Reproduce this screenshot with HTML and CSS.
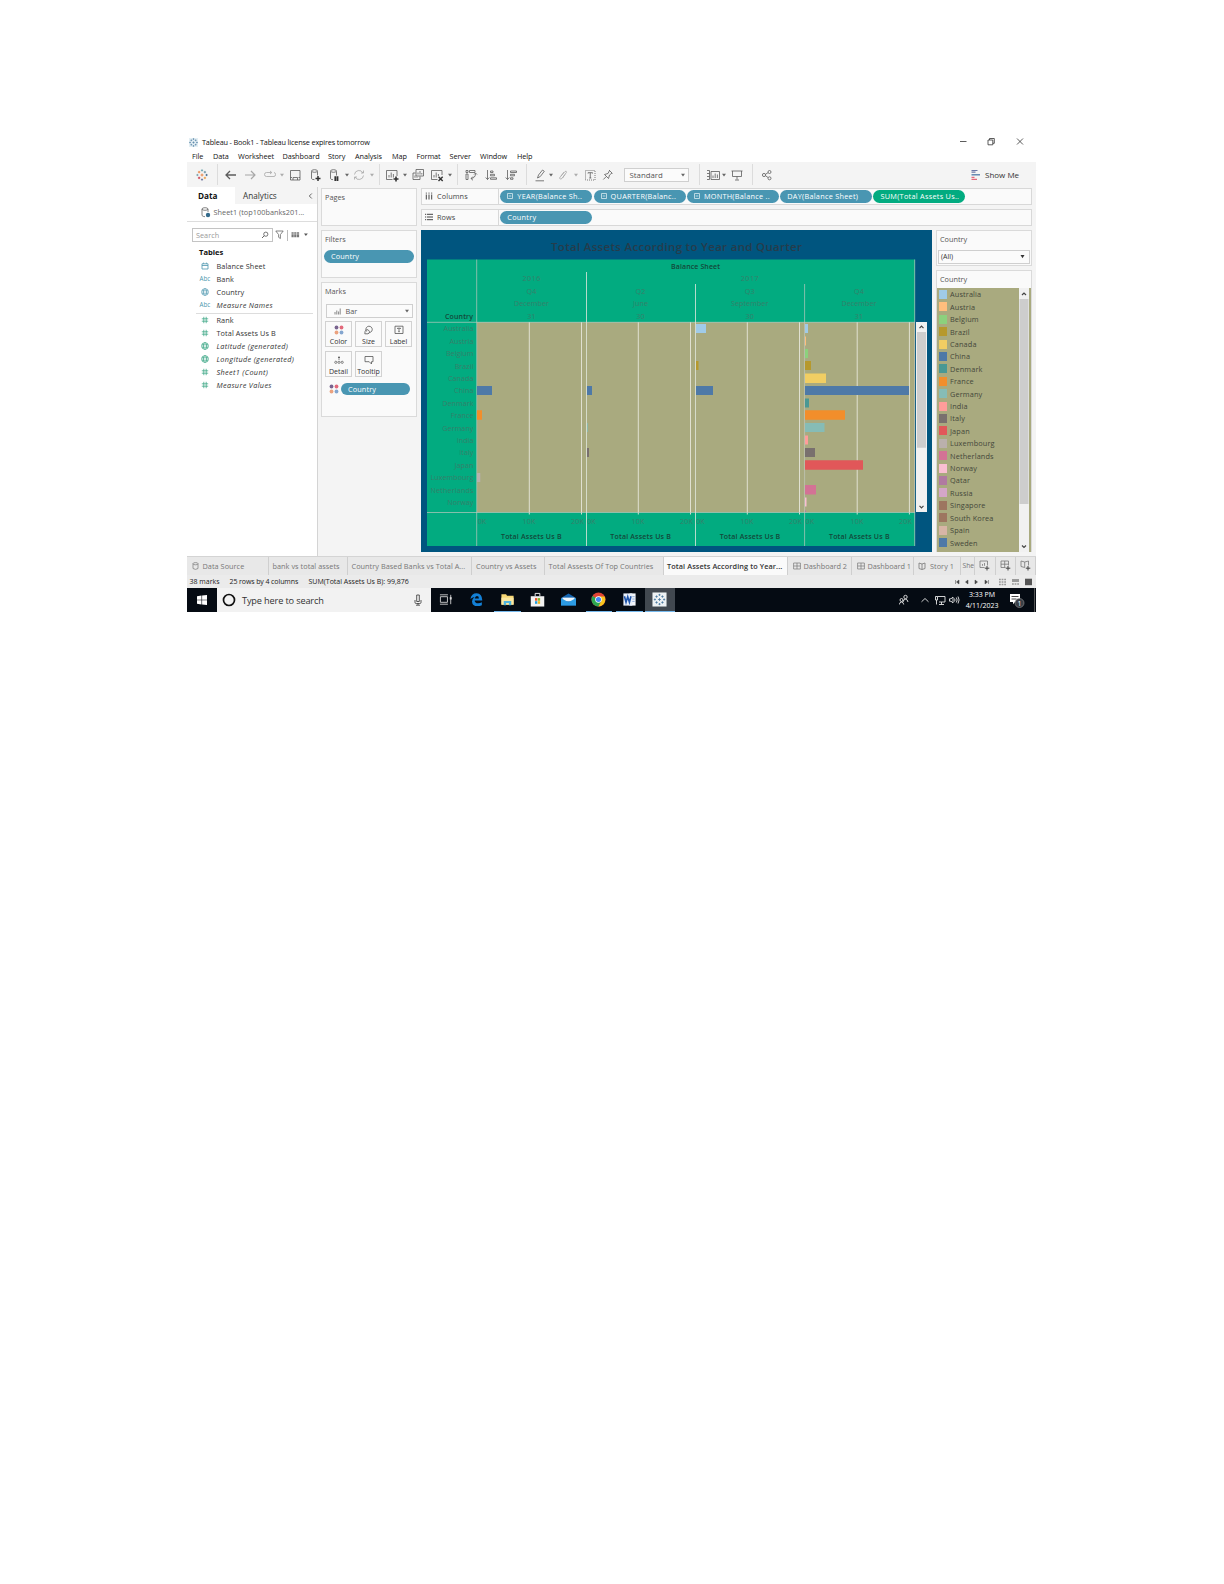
FILE: index.html
```html
<!DOCTYPE html>
<html lang="en">
<head>
<meta charset="utf-8">
<title>Tableau - Book1</title>
<link rel="stylesheet" href="styles.css">
</head>
<body>
<svg width="0" height="0" class="defs">
  <defs>
    <symbol id="caret" viewBox="0 0 4 14"><path d="M0 5.800h4L2 8.400z" fill="#666"/></symbol>
    <symbol id="hash" viewBox="0 0 8 8"><path d="M2.800 .8v6.400M5.200 .8v6.400M.8 2.800h6.400M.8 5.200h6.400" stroke="#2b9f7b" stroke-width=".7" fill="none"/></symbol>
    <symbol id="globe" viewBox="0 0 8 8"><g fill="none" stroke="currentColor" stroke-width=".65"><circle cx="4" cy="4" r="3.400"/><ellipse cx="4" cy="4" rx="1.600" ry="3.400"/><path d="M.8 2.800h6.400M.8 5.200h6.400"/></g></symbol>
    <symbol id="dots" viewBox="0 0 10 10"><circle cx="2.500" cy="2.500" r="1.900" fill="#79648f"/><circle cx="7.500" cy="2.500" r="1.900" fill="#e2697b"/><circle cx="2.500" cy="7.500" r="1.900" fill="#eba27f"/><circle cx="7.500" cy="7.500" r="1.900" fill="#84a6cf"/></symbol>
    <symbol id="dash" viewBox="0 0 8 8"><path d="M.6 1h6.800v6H.6zM4 1v6M.6 4h6.800" fill="none" stroke="#777" stroke-width=".7"/></symbol>
    <symbol id="box" viewBox="0 0 6 6"><path d="M.5.5h5v5h-5zM1.700 3h2.600" fill="none" stroke="#d5eaf0" stroke-width=".8"/></symbol>
    <symbol id="spark" viewBox="0 0 12 12"><g stroke-width=".8" fill="none"><path d="M6 4.500v3M4.500 6h3" stroke="#e8762d"/><path d="M6 .3v2.200M4.900 1.400h2.200" stroke="#5b9aa8"/><path d="M6 9.500v2.200M4.900 10.600h2.200" stroke="#5b6591"/><path d="M.3 6h2.200M1.400 4.900v2.200" stroke="#7099a6"/><path d="M9.500 6h2.200M10.600 4.900v2.200" stroke="#335a84"/><path d="M3.100 1.900v2.400M1.900 3.100h2.400" stroke="#e8762d"/><path d="M8.900 1.900v2.400M7.700 3.100h2.400" stroke="#59879b"/><path d="M3.100 7.700v2.400M1.900 8.900h2.400" stroke="#c72035"/><path d="M8.900 7.700v2.400M7.700 8.900h2.400" stroke="#eb912c"/></g></symbol>
    <symbol id="sparkblue" viewBox="0 0 12 12"><path d="M6 4.500v3M4.500 6h3M6 .3v2.200M4.900 1.400h2.200M6 9.500v2.200M4.900 10.600h2.200M.3 6h2.200M1.400 4.900v2.200M9.500 6h2.200M10.600 4.900v2.200M3.100 1.900v2.400M1.900 3.100h2.400M8.900 1.900v2.400M7.700 3.100h2.400M3.100 7.700v2.400M1.900 8.900h2.400M8.900 7.700v2.400M7.700 8.900h2.400" stroke-width=".7" fill="none" stroke="#3c6f98"/></symbol>
  </defs>
</svg>
<div class="app">
  <header class="titlebar">
    <svg class="tlogo" viewBox="0 0 12 12"><path d="M0 0h12v12H0z" fill="#e4eff4"/><use href="#sparkblue"/></svg>
    <span class="title">Tableau - Book1 - Tableau license expires tomorrow</span>
    <svg class="winctl" width="66" height="12" viewBox="0 0 66 12" fill="none" stroke="#333" stroke-width=".8"><path d="M0 5.500h6.500M57 2.500l6 6M63 2.500l-6 6M28 4h4.800v4.800H28zM29.500 4V2.500h4.800v4.800h-1.500"/></svg>
  </header>
  <nav class="menu"><span>File</span><span>Data</span><span>Worksheet</span><span>Dashboard</span><span>Story</span><span>Analysis</span><span>Map</span><span>Format</span><span>Server</span><span>Window</span><span>Help</span></nav>
  <div class="toolbar">
    <svg class="i" viewBox="-1 -1 14 14"><use href="#spark" width="12" height="12"/></svg>
    <i class="sep"></i>
    <svg class="i" viewBox="0 0 14 14"><path d="M12 7H2.500M6 3L2 7l4 4" stroke-width="1.300"/></svg>
    <svg class="i dim" viewBox="0 0 14 14"><path d="M2 7h9.500M8 3l4 4-4 4" stroke-width="1.200"/></svg>
    <svg class="i dim" viewBox="0 0 14 14"><path d="M8.500 4.500H3.500Q1.500 4.500 1.500 6.500T3.500 8.500H11Q12.500 8.500 12.500 6.500T11 4.500M7 3l1.800 1.500L7 6"/></svg>
    <svg class="c dim"><use href="#caret"/></svg>
    <svg class="i" viewBox="0 0 14 14"><path d="M2.500 2.500h9.500v9.500H2.500zM2.500 9.500h1.500M10.500 9.500H12M5 12v-2.500h4.500V12"/></svg>
    <svg class="i" viewBox="0 0 14 14"><path d="M3.500 3.500v7q0 1 3 1.200M9.500 3.500v4"/><ellipse cx="6.500" cy="3" rx="3" ry="1.300"/><path d="M10 8v5M7.500 10.500h5" stroke="#333" stroke-width="1.500"/></svg>
    <svg class="i" viewBox="0 0 14 14"><path d="M3.500 3.500v7q0 1 2.500 1.200M9.500 3.500v4"/><ellipse cx="6.500" cy="3" rx="3" ry="1.300"/><path d="M8.300 8.300V13M10.500 8.300V13" stroke="#333" stroke-width="1.800"/></svg>
    <svg class="c"><use href="#caret"/></svg>
    <svg class="i dim" viewBox="0 0 14 14"><path d="M2.500 6.500A4.500 4.500 0 0 1 11 5M11.500 7.500A4.500 4.500 0 0 1 3 9M11.500 2.500V5H9M2.500 11.500V9H5"/></svg>
    <svg class="c dim"><use href="#caret"/></svg>
    <i class="sep"></i>
    <svg class="i" viewBox="0 0 14 14"><path d="M7.500 11.500H1.500v-9h10.500V8M4 9.500V7M6.200 9.500V4.500M8.400 9.500V6"/><path d="M11 8.500v5M8.500 11h5" stroke="#333" stroke-width="1.600"/></svg>
    <svg class="c"><use href="#caret"/></svg>
    <svg class="i" viewBox="0 0 14 14"><path d="M5 1.500h7.500v6.500H5zM4.500 5H2v6.500h7V8.500M7 6.500v-2M9 6.500V3M10.800 6.500V5M4 9.800V7.500M6 9.800v-1"/></svg>
    <svg class="i" viewBox="0 0 14 14"><path d="M7.500 11.500H1.500v-9h10.500V7M4 9.500V7M6.200 9.500V4.500M8.400 8V6"/><path d="M8.500 8.800l4.200 4.200M12.700 8.800l-4.200 4.200" stroke="#333" stroke-width="1.400"/></svg>
    <svg class="c"><use href="#caret"/></svg>
    <i class="sep"></i>
    <svg class="i" viewBox="0 0 14 14"><path d="M2 2.500h2v2H2zM5.500 2.500H11v2H5.500zM2 6h2v5.500H2zM11.500 5.500q0 4.500-4.500 5M9 8.500l-2 2 2 1.800M10 6.500l1.500-1.500L13 6.500"/></svg>
    <svg class="i" viewBox="0 0 14 14"><path d="M3.500 2v9.500M1.700 9.500l1.800 2 1.800-2M6.500 3H9v1.500H6.500zM6.500 6.300H10.500v1.500h-4zM6.500 9.800h6v1.500h-6z"/></svg>
    <svg class="i" viewBox="0 0 14 14"><path d="M3.500 2v9.500M1.700 9.500l1.800 2 1.800-2M6.500 3h6v1.500h-6zM6.500 6.300H10.500v1.500h-4zM6.500 9.800H9v1.500H6.500z"/></svg>
    <i class="sep"></i>
    <svg class="i" viewBox="0 0 14 14"><path d="M4.500 10l1-3L9.500 2l1.800 1.300-4 5.200zM2.500 12.800H11"/></svg>
    <svg class="c"><use href="#caret"/></svg>
    <svg class="i dim" viewBox="0 0 14 14"><path d="M5 8l4-4.500q1.500-1 1.500.8L6 10.500q-2 1.500-2.500-.5L8 4M9 6.500L6.500 10"/></svg>
    <svg class="c dim"><use href="#caret"/></svg>
    <svg class="i" viewBox="0 0 14 14"><path d="M2.500 2.500h9.500v9.500H2.500z" stroke-dasharray="1 1"/><path d="M5 5.500V4.700h4.500v.8M7.250 4.700V10M6.300 10h2"/></svg>
    <svg class="i" viewBox="0 0 14 14"><path d="M8 2l3.500 3.500M8.500 2.500L7 5.500 3.500 6.500 7.500 10.500 8.500 7 11 5M5.300 8.500l-3 3"/></svg>
    <div class="select std"><span>Standard</span><svg class="c"><use href="#caret"/></svg></div>
    <i class="sep"></i>
    <svg class="i" viewBox="0 0 14 14"><path d="M1 2.500h2.500v9H1M1 5.500h2.500M1 8.500h2.500M5 3.500h8.500v8H5zM7 10V7.500M9.200 10V5.500M11.400 10V6.500"/></svg>
    <svg class="c"><use href="#caret"/></svg>
    <svg class="i" viewBox="0 0 14 14"><path d="M1.500 3h11M2.500 3v5.500h9V3M7 8.500v3M5 12h4"/></svg>
    <i class="sep"></i>
    <svg class="i" viewBox="0 0 14 14"><circle cx="4" cy="7" r="1.600"/><circle cx="9.500" cy="4" r="1.500"/><circle cx="9.500" cy="10.300" r="1.500"/><path d="M5.500 6.300L8 4.700M5.500 7.700L8 9.500"/></svg>
    <div class="showme"><svg width="10" height="12" viewBox="0 0 10 12"><path d="M.5 1.500h6M.5 3.200h4" stroke="#6c78a8" stroke-width="1.200"/><path d="M.5 5.800h8.500" stroke="#4e79a7" stroke-width="1.300"/><path d="M.5 8.400h3M.5 10.300h5.500" stroke="#e2697b" stroke-width="1.200"/></svg><span>Show Me</span></div>
  </div>

  <main class="body">
    <aside class="data">
      <div class="dtabs"><b>Data</b><span>Analytics</span><svg width="5" height="8" viewBox="0 0 5 8"><path d="M3.800 1.500L1.300 4l2.500 2.500" fill="none" stroke="#444" stroke-width=".8"/></svg></div>
      <div class="source"><svg width="10" height="11" viewBox="0 0 10 11"><g fill="none" stroke="#666" stroke-width=".8"><ellipse cx="4" cy="2" rx="3" ry="1.300"/><path d="M1 2v6.500q1 1.200 3 1.200M7 2v3"/></g><circle cx="7" cy="8" r="2.200" fill="#356b8c"/></svg><span>Sheet1 (top100banks201...</span></div>
      <div class="find">
        <div class="search"><span>Search</span><svg width="8" height="8" viewBox="0 0 8 8"><circle cx="4.800" cy="3.200" r="2.100" fill="none" stroke="#555" stroke-width=".8"/><path d="M3.300 4.700L1 7" stroke="#555" stroke-width=".9"/></svg></div>
        <svg width="9" height="10" viewBox="0 0 9 10"><path d="M.8 1h7.400L5.400 4.600V8.500L3.600 7.300V4.600z" fill="none" stroke="#666" stroke-width=".8"/></svg>
        <i></i>
        <svg width="20" height="10" viewBox="0 0 20 10"><path d="M.5 2.200h2.200v5H.5zM3.200 2.200h2.200v5H3.200zM5.900 2.200h2.200v5H5.900z" fill="#777"/><path d="M0 4h8.500" stroke="#fff" stroke-width=".5"/><path d="M13 3.500h3.800L14.900 6z" fill="#555"/></svg>
      </div>
      <h3>Tables</h3>
      <ul class="fields dims">
        <li><svg class="g" viewBox="0 0 8 8"><path d="M1 1.800h6v5.200H1zM1 3.500h6M2.600.6v1.200M5.400.6v1.200" fill="none" stroke="#4b96ae" stroke-width=".8"/></svg>Balance Sheet</li>
        <li><small>Abc</small>Bank</li>
        <li><svg class="g blue"><use href="#globe"/></svg>Country</li>
        <li class="it"><small>Abc</small>Measure Names</li>
      </ul>
      <ul class="fields meas">
        <li><svg class="g"><use href="#hash"/></svg>Rank</li>
        <li><svg class="g"><use href="#hash"/></svg>Total Assets Us B</li>
        <li class="it"><svg class="g green"><use href="#globe"/></svg>Latitude (generated)</li>
        <li class="it"><svg class="g green"><use href="#globe"/></svg>Longitude (generated)</li>
        <li class="it"><svg class="g"><use href="#hash"/></svg>Sheet1 (Count)</li>
        <li class="it"><svg class="g"><use href="#hash"/></svg>Measure Values</li>
      </ul>
    </aside>

    <section class="cards">
      <div class="card pages"><h4>Pages</h4></div>
      <div class="card filters"><h4>Filters</h4><div class="pill">Country</div></div>
      <div class="card marks"><h4>Marks</h4>
        <div class="select bar"><svg width="7" height="7" viewBox="0 0 7 7"><path d="M1 6.500V4M2.800 6.500V2.500M4.600 6.500V3.500M6.200 6.500V.5" stroke="#888" stroke-width="1"/></svg><span>Bar</span><svg class="c"><use href="#caret"/></svg></div>
        <div class="btns">
          <div><svg><use href="#dots"/></svg>Color</div>
          <div><svg viewBox="0 0 10 10"><path d="M2.600 6.500A3.200 3.200 0 1 1 5.500 7.600M2.600 4.700Q.5 6 .8 8.800H4Q5.800 8.500 5.400 6.300Q4.300 4.200 2.600 4.700" fill="none" stroke="#555" stroke-width=".8"/></svg>Size</div>
          <div><svg viewBox="0 0 10 10"><path d="M1 1.200h8v7.300H1zM3.500 4V3.200h3V4M5 3.200v3.500M4.300 6.700h1.400" fill="none" stroke="#555" stroke-width=".8"/></svg>Label</div>
          <div><svg viewBox="0 0 10 10"><circle cx="5" cy="2.500" r="1" fill="#555"/><path d="M5 4v1" stroke="#555" stroke-width=".7"/><g fill="none" stroke="#555" stroke-width=".7"><circle cx="1.800" cy="7.300" r="1.100"/><circle cx="5" cy="7.300" r="1.100"/><circle cx="8.200" cy="7.300" r="1.100"/></g></svg>Detail</div>
          <div><svg viewBox="0 0 10 10"><path d="M1 1.500h8v5.200H7.500V9L5.200 6.700H1z" fill="none" stroke="#555" stroke-width=".8"/></svg>Tooltip</div>
        </div>
        <div class="enc"><svg width="10" height="10"><use href="#dots"/></svg><div class="pill">Country</div></div>
      </div>
    </section>

    <section class="work">
      <div class="shelf"><div class="lab"><svg width="8" height="8" viewBox="0 0 8 8"><path d="M1.300 2.500V7.500M4 2.500V7.500M6.700 2.500V7.500M1.300.6v1M4 .6v1M6.700.6v1" stroke="#444"/></svg>Columns</div>
        <div class="pill"><svg><use href="#box"/></svg><span>YEAR(Balance Sh..</span></div><div class="pill"><svg><use href="#box"/></svg><span>QUARTER(Balanc..</span></div><div class="pill"><svg><use href="#box"/></svg><span>MONTH(Balance ..</span></div><div class="pill"><span>DAY(Balance Sheet)</span></div><div class="pill green"><span>SUM(Total Assets Us..</span></div></div>
      <div class="shelf"><div class="lab"><svg width="8" height="8" viewBox="0 0 8 8"><path d="M2 1.300h6M2 4h6M2 6.700h6M0 1.300h1.200M0 4h1.200M0 6.700h1.200" stroke="#444"/></svg>Rows</div><div class="pill">Country</div></div>
      <div class="lower">
        <svg class="viz" width="511" height="322" viewBox="421 230 511 322">
          <path d="M421 230h511v322H421z" fill="#00557f"/>
          <path d="M427 259.500h488V546H427z" fill="#02ab80"/>
          <path d="M477 322.300h438v190H477z" fill="#a9aa7f"/>
          <text x="551" y="250.800" class="vt" textLength="251">Total Assets According to Year and Quarter</text>
          <g stroke="#e6e7da" stroke-width=".9">
            <path d="M529.300 322v192.500M581.500 322v192.500M638.300 322v192.500M690.500 322v192.500M747.300 322v192.500M799.500 322v192.500M857.200 322v192.500M909.400 322v192.500"/>
          </g>
          <g fill="none" stroke="#c4c9c0" stroke-opacity=".75" stroke-width=".9"><path d="M476.700 259.500V546M804.600 284V546M914.700 259.500V546M427 322.300h488M427 512.500h488"/><path d="M586.500 272V546M695.500 284V546" stroke="#dfe6dc" stroke-opacity=".9"/></g>
          <g class="hb"><text x="671" y="268.800" textLength="49">Balance Sheet</text><text x="445" y="318.600" textLength="28">Country</text>
            <text x="501" y="539.300" textLength="60.500">Total Assets Us B</text><text x="610.300" y="539.300" textLength="60.500">Total Assets Us B</text><text x="719.700" y="539.300" textLength="60.500">Total Assets Us B</text><text x="829" y="539.300" textLength="60.500">Total Assets Us B</text></g>
          <g class="hd mid"><text x="531.500" y="281.300" textLength="18">2016</text><text x="749.700" y="281.300" textLength="18">2017</text>
            <text x="531.500" y="293.800">Q4</text><text x="640.500" y="293.800">Q2</text><text x="749.700" y="293.800">Q3</text><text x="859" y="293.800">Q4</text>
            <text x="531.500" y="306.300">December</text><text x="640.500" y="306.300">June</text><text x="749.700" y="306.300">September</text><text x="859" y="306.300">December</text>
            <text x="531.500" y="318.700">31</text><text x="640.500" y="318.700">30</text><text x="749.700" y="318.700">30</text><text x="859" y="318.700">31</text>
            <text x="482" y="524.300">0K</text><text x="529" y="524.300">10K</text><text x="577.500" y="524.300">20K</text><text x="591.500" y="524.300">0K</text><text x="638" y="524.300">10K</text><text x="686.500" y="524.300">20K</text><text x="700.500" y="524.300">0K</text><text x="747" y="524.300">10K</text><text x="795.500" y="524.300">20K</text><text x="809.800" y="524.300">0K</text><text x="857" y="524.300">10K</text><text x="905.500" y="524.300">20K</text></g>
          <g class="hd end"><text x="473.500" y="331.200">Australia</text><text x="473.500" y="343.600">Austria</text><text x="473.500" y="356">Belgium</text><text x="473.500" y="368.500">Brazil</text><text x="473.500" y="380.900">Canada</text><text x="473.500" y="393.300">China</text><text x="473.500" y="405.700">Denmark</text><text x="473.500" y="418.100">France</text><text x="473.500" y="430.500">Germany</text><text x="473.500" y="443">India</text><text x="473.500" y="455.400">Italy</text><text x="473.500" y="467.800">Japan</text><text x="473.500" y="480.200" textLength="43">Luxembourg</text><text x="473.500" y="492.600" textLength="43">Netherlands</text><text x="473.500" y="505">Norway</text></g>
          <g>
            <path d="M477 386h15v9h-15zM587 386h5v9h-5zM696 386h17v9h-17zM805 386h104v9H805z" fill="#4e79a7"/>
            <path d="M477 410.300h5v9.500h-5zM805 410.300h40v9.500h-40z" fill="#f28e2b"/>
            <path d="M477 473h3.300v9H477z" fill="#bab0ac"/>
            <path d="M587 423h.8v9h-.8zM805 423h19.500v9H805z" fill="#86bcb6"/>
            <path d="M587 448h2v9h-2zM805 448h10v9h-10z" fill="#79706e"/>
            <path d="M696 324h10v9h-10zM805 324h3v9h-3z" fill="#a0cbe8"/>
            <path d="M696 361h2.500v9H696zM805 361h6v9h-6z" fill="#b6992d"/>
            <path d="M805 336.500h1v9h-1z" fill="#ffbe7d"/><path d="M805 349h3v9h-3z" fill="#8cd17d"/>
            <path d="M805 373.500h21v9.500h-21z" fill="#f1ce63"/><path d="M805 398.500h4v9h-4z" fill="#499894"/>
            <path d="M805 435.500h3v9h-3z" fill="#ff9d9a"/><path d="M805 460.200h58v9.500h-58z" fill="#e15759"/>
            <path d="M805 485h11v9.500h-11z" fill="#d37295"/><path d="M805 497.500h1.500v9h-1.500z" fill="#fabfd2"/><path d="M805 510.500h1v1.500h-1z" fill="#b07aa1"/>
          </g>
          <path d="M916 322h11v190h-11z" fill="#f1f1f1"/><path d="M917 332h9v115.700h-9z" fill="#cdcdcd"/>
          <path d="M919.500 328.200l2-2 2 2M919.500 505.800l2 2 2-2" fill="none" stroke="#444" stroke-width="1.200"/>
        </svg>
        <div class="right">
          <div class="card cfilter"><h4>Country</h4><div class="select all"><span>(All)</span><svg width="5" height="5" viewBox="0 0 5 5"><path d="M.5 1h4L2.500 4.200z" fill="#333"/></svg></div></div>
          <div class="card legend"><h4>Country</h4>
            <div class="lg"><ul>
              <li><i class="c1"></i>Australia</li><li><i class="c2"></i>Austria</li><li><i class="c3"></i>Belgium</li><li><i class="c4"></i>Brazil</li><li><i class="c5"></i>Canada</li><li><i class="c6"></i>China</li><li><i class="c7"></i>Denmark</li><li><i class="c8"></i>France</li><li><i class="c9"></i>Germany</li><li><i class="c10"></i>India</li><li><i class="c11"></i>Italy</li><li><i class="c12"></i>Japan</li><li><i class="c13"></i>Luxembourg</li><li><i class="c14"></i>Netherlands</li><li><i class="c15"></i>Norway</li><li><i class="c16"></i>Qatar</li><li><i class="c17"></i>Russia</li><li><i class="c18"></i>Singapore</li><li><i class="c18"></i>South Korea</li><li><i class="c20"></i>Spain</li><li><i class="c6"></i>Sweden</li>
            </ul>
            <svg class="sb" width="10" height="264" viewBox="0 0 10 264"><path d="M0 0h10v264H0z" fill="#f1f1f1"/><path d="M.5 11h9v205h-9z" fill="#cdcdcd"/><path d="M3 7l2-2 2 2M3 257.500l2 2 2-2" fill="none" stroke="#444" stroke-width="1.200"/></svg></div>
          </div>
        </div>
      </div>
    </section>
  </main>

  <div class="tabs">
    <div class="src"><svg width="7" height="8" viewBox="0 0 7 8"><g fill="none" stroke="#777" stroke-width=".7"><ellipse cx="3.500" cy="1.700" rx="2.500" ry="1.100"/><path d="M1 1.700V6.500q2.500 1.800 5 0V1.700"/></g></svg>Data Source</div>
    <div>bank vs total assets</div><div>Country Based Banks vs Total A...</div><div>Country vs Assets</div><div>Total Assests Of Top Countries</div><div class="on">Total Assets According to Year...</div>
    <div class="db"><svg width="8" height="8"><use href="#dash"/></svg>Dashboard 2</div><div class="db"><svg width="8" height="8"><use href="#dash"/></svg>Dashboard 1</div>
    <div><svg width="8" height="8" viewBox="0 0 8 8"><path d="M4 2v5.500L1 6.500V1l3 1 3-1v5.500L4 7.500" fill="none" stroke="#777" stroke-width=".8"/></svg>Story 1</div>
    <div class="cut">She</div>
    <div><svg width="11" height="11" viewBox="0 0 11 11"><path d="M5.500 7.500H1V1h7.500v4.500M3.500 5.800V4M5.500 5.800V3" fill="none" stroke="#777" stroke-width=".8"/><path d="M8 6v4.500M5.800 8.200h4.500" stroke="#444"/></svg></div>
    <div><svg width="11" height="11" viewBox="0 0 11 11"><path d="M5.500 7.500H1V1h7.500v4.500M4.700 1v6.500M1 4.200h7.500" fill="none" stroke="#777" stroke-width=".8"/><path d="M8 6v4.500M5.800 8.200h4.500" stroke="#444"/></svg></div>
    <div><svg width="11" height="11" viewBox="0 0 11 11"><path d="M4.700 2v5.500L1 6.500V1l3.700 1 3.800-1v4.500" fill="none" stroke="#777" stroke-width=".8"/><path d="M8 6v4.500M5.800 8.200h4.500" stroke="#444"/></svg></div>
  </div>
  <div class="status"><span>38 marks</span><span>25 rows by 4 columns</span><span>SUM(Total Assets Us B): 99,876</span>
    <svg width="80" height="10" viewBox="0 0 80 10"><path d="M.5 3v4M4 3v4L1.500 5zM13 3v4L10.500 5zM20 3v4L22.500 5zM30 3v4L32.500 5zM33.500 3v4" fill="#444" stroke="#444" stroke-width=".5"/><path d="M44 2.500h7M44 5h7M44 7.500h7" stroke="#999" stroke-width="1.600" stroke-dasharray="1.800 .8"/><path d="M57 3.500h7" stroke="#999" stroke-width="3"/><path d="M57 7h7" stroke="#999" stroke-width="1.500" stroke-dasharray="1.800 .8"/><path d="M70 1.700h7v6.500h-7z" fill="#555"/></svg></div>

  <footer class="taskbar">
    <div class="start"><svg width="10" height="10" viewBox="0 0 10 10"><path d="M0 1.300l4.500-.7v4.100H0zM5.100.5L10 0v4.700H5.100zM0 5.300h4.500v4.100L0 8.700zM5.100 5.300H10V10l-4.900-.6z" fill="#fff"/></svg></div>
    <div class="sbox"><svg width="14" height="14" viewBox="0 0 14 14"><circle cx="7" cy="7" r="5.500" fill="none" stroke="#111" stroke-width="1.700"/></svg><span>Type here to search</span><svg width="8" height="12" viewBox="0 0 8 12"><path d="M2.700 1h2.600v6.500H2.700zM1 6v2.500q0 1 1.300 1h3.400Q7 9.500 7 8.500V6M4 9.500V11M2 11.200h4" fill="none" stroke="#333" stroke-width=".8"/></svg></div>
    <div class="apps">
      <div><svg viewBox="0 0 16 16"><path d="M1.500 5h7.500v6H1.500zM1 3h8.500M1 13h8.500M12.500 3v10" fill="none" stroke="#ddd" stroke-width=".9"/><path d="M11.500 5.500h2v2.500h-2z" fill="#ddd"/></svg></div>
      <div><svg viewBox="0 0 16 16"><path d="M1.500 7.500Q2.500 1.300 8.200 1.300q5.800.3 6 7.700H6q.3 3 3.700 3 2.300 0 4-1v3q-2 1-4.800 1Q3.500 15 3.200 10 3.200 7 6 5.200 3.200 5.500 1.500 7.500zM6.200 6.800h4.400Q10.500 4.300 8.400 4.300q-1.800.1-2.200 2.500z" fill="#1380d6"/></svg></div>
      <div class="run"><svg viewBox="0 0 16 16"><path d="M1.500 2.500h5l1 1.500h7V13.500h-13z" fill="#f7d774"/><path d="M1.500 6h13v7.500h-13z" fill="#fbe7a0"/><path d="M4 14V9.500h8V14h-2.500v-2.300h-3V14z" fill="#4fb3dc"/></svg></div>
      <div><svg viewBox="0 0 16 16"><path d="M5.500 4.500V1.500h5v3" fill="none" stroke="#eee" stroke-width="1"/><path d="M.8 4.500h14.400v11H.8z" fill="#f2f2f2"/><path d="M5.300 6.500h2.500v2.800H5.300z" fill="#e8532b"/><path d="M8.300 6.500h2.500v2.800H8.300z" fill="#7db82b"/><path d="M5.300 9.800h2.500v2.800H5.300z" fill="#1f9fe0"/><path d="M8.300 9.800h2.500v2.800H8.300z" fill="#f2b51c"/></svg></div>
      <div><svg viewBox="0 0 16 16"><path d="M0 6.500L8 1.500l8 5V14.500H0z" fill="#1565b0"/><path d="M1.500 6h13v4h-13z" fill="#eef6fb"/><path d="M0 6.500L8 11l8-4.500V14.500H0z" fill="#2c9be4"/></svg></div>
      <div class="run"><svg viewBox="0 0 16 16"><circle cx="8" cy="8" r="7.500" fill="#e04434"/><path d="M8 8L1.500 4.300A7.500 7.500 0 0 0 8 15.500l3-5.800z" fill="#2da650"/><path d="M8 8l3 1.700L8 15.500A7.500 7.500 0 0 0 14.500 4.800H8z" fill="#f8c51d"/><circle cx="8" cy="8" r="3.500" fill="#fff"/><circle cx="8" cy="8" r="2.700" fill="#4285f4"/></svg></div>
      <div class="run"><svg viewBox="0 0 16 16"><path d="M8 1.500h6.500v13H8z" fill="#f4f7fc"/><path d="M9 5h4.500M9 7.500h4.500M9 10h4.500" stroke="#6c94d0" stroke-width=".8"/><path d="M1.500 1.500H11v13H1.500z" fill="#e8effa"/><path d="M2.600 4.500L4.300 11l1.800-6 1.800 6 1.700-6.500" fill="none" stroke="#1f55ab" stroke-width="1.700"/></svg></div>
      <div class="run cur"><svg viewBox="0 0 16 16"><path d="M.5.500h15v15H.5z" fill="#edf1f4"/><use href="#sparkblue" x="1.500" y="1.500" width="13" height="13"/></svg></div>
    </div>
    <div class="tray">
      <svg width="62" height="12" viewBox="0 0 62 12" fill="none" stroke="#e6e6e6" stroke-width=".9"><circle cx="6.500" cy="3" r="1.700"/><path d="M4 8Q4.500 5.200 6.500 5.200T9 8"/><circle cx="2.500" cy="6" r="1.500"/><path d="M.3 10.500q.3-2.500 2.200-2.500t2.200 2.500M22.500 7.800L26 4.500l3.500 3.300M38.500 2.500h7.500v5.500h-6M42.500 8v2.500M40 10.500h5M36.500 2.500h2V6h-2zM37.500 6v4.500M50.500 4.800h1.500l2-1.800v6l-2-1.800h-1.500zM55.500 4.500q1 1.500 0 3M57.300 3.500q1.700 2.500 0 5M59 2.500q2.200 3.500 0 7"/></svg>
      <div class="clock"><span>3:33 PM</span><span>4/11/2023</span></div>
      <svg width="16" height="16" viewBox="0 0 16 16"><path d="M1 2h10v8H6l-2 2.300V10H1z" fill="#fff"/><path d="M2.500 4.500h7M2.500 7h5" stroke="#333" stroke-width=".9"/><circle cx="10.500" cy="11" r="4.500" fill="#3a3f46" stroke="#999" stroke-width=".6"/><text x="10.500" y="13.500" font-size="7" text-anchor="middle" fill="#fff">1</text></svg>
      <i></i>
    </div>
  </footer>
</div>
</body>
</html>
```
FILE: styles.css
```css
* { box-sizing: border-box; }
body { margin: 0; padding: 136px 0 0 187px; background: #fff; font-family: "Open Sans", "Noto Sans", sans-serif; font-size: 7.3px; line-height: 10px; color: #333; }
.defs { position: absolute; }
svg { flex: none; }
h3, h4, ul { margin: 0; padding: 0; list-style: none; }
.app { width: 849px; height: 476px; display: flex; flex-direction: column; white-space: nowrap; background: #fff; }
.titlebar { height: 14px; display: flex; align-items: center; padding: 0 10px 2px 2px; color: #111; }
.tlogo { width: 9px; height: 9px; margin-right: 4px; }
.title { flex: 1; letter-spacing: -.16px; }
.menu { height: 12px; padding: 1px 0 0 5px; display: grid; grid-template-columns: 21px 25px 44.500px 45.500px 27px 37px 24.500px 33px 30.500px 37px 20px; color: #111; letter-spacing: -.07px; }
.toolbar { height: 25px; background: #f4f4f4; display: grid; align-items: center; padding-left: 8px;
  grid-template-columns: 21.5px 7.5px 19px 19.5px 17.5px 8px 20px 19px 17.5px 7px 18px 9.5px 6px 17.5px 8.5px 18.5px 18px 9.5px 7px 20px 20px 21.5px 7.5px 16px 7px 17.5px 9px 18.5px 22.5px 75px 7.5px 15.5px 8.5px 22px 7.5px 211.5px auto; }
.i { width: 14px; height: 14px; fill: none; stroke: #5c5c5c; stroke-width: .8; }
.dim { opacity: .5; }
.c { width: 4px; height: 14px; }
.sep { width: 1px; height: 21px; background: #dcdcdc; }
.select { display: flex; align-items: center; background: #fbfbfb; border: 1px solid #cfcfcf; }
.std { width: 65px; height: 14px; padding-left: 5px; font-size: 7.8px; color: #555; }
.std span { flex: 1; }
.select .c { margin-right: 3px; }
.showme { display: flex; align-items: center; gap: 4px; font-size: 8px; }
.body { height: 369px; display: flex; background: #f4f4f4; }
.data { width: 131px; background: #fff; border-right: 1px solid #d4d4d4; }
.dtabs { display: flex; align-items: center; height: 17px; font-size: 8.2px; background: #f4f4f4; }
.dtabs b { width: 48px; padding-left: 11px; background: #fff; line-height: 17px; color: #111; }
.dtabs span { width: 73px; padding-left: 8px; }
.source { height: 18px; display: flex; align-items: center; padding: 0 0 1px 14px; gap: 2.500px; border-bottom: 1px solid #ddd; color: #666; letter-spacing: .03px; }
.find { display: flex; align-items: center; height: 14px; margin: 6px 0 0 5px; }
.search { width: 81px; height: 14px; border: 1px solid #c4c4c4; display: flex; align-items: center; justify-content: space-between; padding: 0 3px; color: #999; margin-right: 2px; }
.find i { width: 1px; height: 11px; background: #bbb; margin: 0 3px; }
.data h3 { font-size: 7.6px; line-height: 10px; margin: 5px 0 2.500px 12px; color: #111; }
.fields { padding-left: 14px; }
.fields li { height: 13px; display: flex; align-items: center; letter-spacing: .08px; }
.fields .it { font-style: italic; letter-spacing: .34px; }
.g { width: 8px; height: 8px; margin-right: 7.500px; }
.blue { color: #4b96ae; } .green { color: #2b9f7b; }
.fields small { width: 16px; margin: 0 1px 0 -1.500px; font-size: 6.2px; font-style: normal; letter-spacing: 0; color: #4b96ae; }
.meas { border-top: 1px solid #ddd; margin: 0 4px 0 9px; padding: 0 0 0 5px; }
.dims { margin-bottom: 1px; }
.cards { width: 103px; padding: .5px 0 0 3px; display: flex; flex-direction: column; gap: 4px; }
.card { background: #fafafa; border: 1px solid #dadada; }
.card h4 { font-weight: normal; font-size: 7.3px; line-height: 10px; padding: 3px 0 0 3px; color: #555; }
.cards .card { width: 96px; }
.pages { height: 38.500px; } .filters { height: 48px; } .marks { height: 135px; }
.pill { height: 12.500px; border-radius: 6.500px; background: #4996b2; color: #fff; display: flex; align-items: center; padding-left: 7px; width: 92px; line-height: 12px; letter-spacing: .13px; }
.shelf .pill { letter-spacing: .27px; }
.pill svg { width: 6px; height: 6px; margin-right: 4px; }
.pill.green { background: #02ab80; color: #fff; }
.filters .pill { width: 89.500px; margin: 6px 0 0 2px; }
.bar { width: 87px; height: 14px; margin: 8px 0 3px 3.500px; padding-left: 7px; gap: 5px; color: #555; }
.bar span { flex: 1; }
.btns { display: grid; grid-template-columns: repeat(3, 27px); gap: 4px 3px; margin-left: 3px; }
.btns div { height: 26px; border: 1px solid #d2d2d2; display: flex; flex-direction: column; align-items: center; padding-top: 3px; line-height: 11px; font-size: 7px; }
.btns svg { width: 10px; height: 10px; margin-bottom: 1px; }
.enc { display: flex; align-items: center; margin: 5.500px 0 0 7px; gap: 2px; }
.enc .pill { width: 69px; }
.work { flex: 1; padding-top: .5px; }
.shelf { width: 611px; height: 17.500px; border: 1px solid #d8d8d8; background: #fafafa; display: flex; align-items: center; gap: 1.300px; margin-bottom: 3.500px; }
.lab { width: 77px; height: 100%; border-right: 1px solid #d8d8d8; display: flex; align-items: center; gap: 4px; padding-left: 3px; color: #444; letter-spacing: .1px; }
.lower { display: flex; gap: 4px; padding-top: .5px; }
.viz { display: block; font-size: 7px; }
.vt { font-size: 11.5px; font-weight: 600; fill: #263c4b; }
.hb { font-weight: 600; fill: #13483a; }
.hd { fill: #36806a; font-size: 7.2px; letter-spacing: .05px; }
.mid { text-anchor: middle; } .end { text-anchor: end; }
.right { width: 96px; }
.cfilter { height: 36px; margin-bottom: 3.500px; }
.all { height: 13.500px; margin: 6px 1px 0 1px; padding: 0 4px 0 2px; justify-content: space-between; font-size: 7px; }
.legend { height: 282.500px; overflow: hidden; border-bottom: 0; }
.legend h4 { height: 17.500px; }
.lg { display: flex; background: #a9aa7f; }
.lg ul { flex: 1; padding: .2px 0 0 1.500px; }
.lg .sb { margin-right: 2px; }
.lg li { height: 12.420px; display: flex; align-items: center; color: #44473a; letter-spacing: .15px; }
.lg i { width: 8.500px; height: 9px; margin-right: 3px; }
.c1 { background: #a0cbe8; } .c2 { background: #ffbe7d; } .c3 { background: #8cd17d; } .c4 { background: #b6992d; } .c5 { background: #f1ce63; }
.c6 { background: #4e79a7; } .c7 { background: #499894; } .c8 { background: #f28e2b; } .c9 { background: #86bcb6; } .c10 { background: #ff9d9a; }
.c11 { background: #79706e; } .c12 { background: #e15759; } .c13 { background: #bab0ac; } .c14 { background: #d37295; } .c15 { background: #fabfd2; }
.c16 { background: #b07aa1; } .c17 { background: #d4a6c8; } .c18 { background: #9d7660; } .c20 { background: #d7b5a6; }
.tabs { height: 19px; display: grid; background: #e8e8e8; border-top: 1px solid #d4d4d4; color: #777; letter-spacing: .04px;
  grid-template-columns: 81.500px 79px 124.500px 72.500px 119.500px 124px 64px 62px 46.500px 14.500px 21px 20px 20px; }
.tabs div { border-right: 1px solid #cfcfcf; display: flex; align-items: center; gap: 4px; padding: 0 0 1px 4px; overflow: hidden; }
.tabs .src { padding-left: 5px; gap: 3.500px; }
.tabs .on { background: #fafafa; color: #333; font-weight: 600; padding-left: 3px; letter-spacing: .1px; }
.tabs .db { gap: 3px; padding-left: 4.500px; letter-spacing: -.02px; }
.tabs .cut { padding-left: 2px; font-size: 6.8px; letter-spacing: -.1px; }
.status { height: 13px; display: flex; align-items: center; background: #ebebeb; padding-left: 2.500px; color: #222; font-size: 7px; }
.status span:nth-child(1) { width: 40px; } .status span:nth-child(2) { width: 79px; letter-spacing: -.1px; } .status span:nth-child(3) { flex: 1; }
.status svg { margin-right: 1px; }
.taskbar { height: 24px; display: flex; background: #050b13; }
.start { width: 30px; display: grid; place-items: center; }
.sbox { width: 214px; background: #f2f2f2; display: flex; align-items: center; padding: 0 9px 0 5px; font-size: 9.2px; color: #333; }
.sbox span { flex: 1; padding: 1px 0 0 6px; letter-spacing: -.15px; }
.apps { display: grid; grid-template-columns: repeat(8, 30.500px); }
.apps div { display: grid; place-items: center; border-bottom: 1px solid transparent; margin-right: 2px; margin-left: 2px; }
.apps .run { border-bottom: 1px solid #76b9ed; }
.apps .cur { background: #414850; margin: 0; }
.apps svg { width: 15px; height: 15px; }
.tray { flex: 1; display: flex; align-items: center; justify-content: flex-end; color: #fff; }
.clock { display: flex; flex-direction: column; align-items: center; width: 36px; margin: 0 9px 0 3px; line-height: 11px; font-size: 7px; letter-spacing: -.05px; }
.tray i { width: 1px; height: 24px; background: #555; margin: 0 1px 0 9px; }
```
